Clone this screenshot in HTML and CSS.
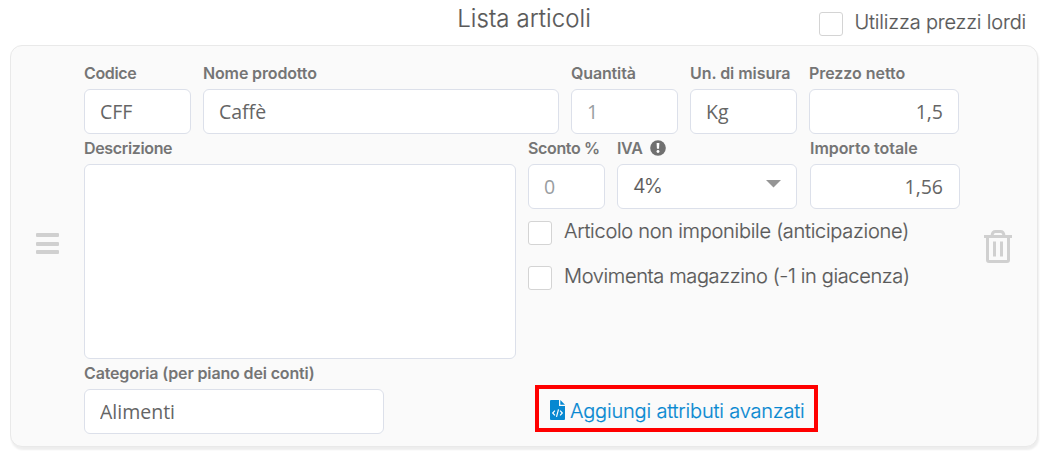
FILE: index.html
```html
<!DOCTYPE html>
<html lang="it">
<head>
<meta charset="utf-8">
<title>Lista articoli</title>
<link rel="stylesheet" href="styles.css">
</head>
<body>
<header class="header">
  <span></span>
  <h1 class="title"><span>Lista articoli</span></h1>
  <label class="check gross"><input type="checkbox" class="box"><span class="t-gross">Utilizza prezzi lordi</span></label>
</header>
<main class="card">
  <div class="handle"><i></i><i></i><i></i></div>
  <div class="form">
    <div class="row">
      <div class="field w-107"><label class="tight">Codice</label><input value="CFF"></div>
      <div class="field w-356"><label>Nome prodotto</label><input value="Caffè"></div>
      <div class="field w-107"><label>Quantità</label><input placeholder="1"></div>
      <div class="field w-107"><label class="wide">Un. di misura</label><input value="Kg"></div>
      <div class="field w-150"><label class="wide">Prezzo netto</label><input class="num" value="1,5"></div>
    </div>
    <div class="row middle">
      <div class="field w-432"><label class="tight">Descrizione</label><textarea></textarea></div>
      <div class="side">
        <div class="row">
          <div class="field w-77"><label class="tight">Sconto %</label><input placeholder="0"></div>
          <div class="field w-180"><label class="tight">IVA <svg class="info" viewBox="0 0 16 16"><circle cx="8" cy="8" r="7.8"/><path d="M6.6 3h2.8l-.35 5.8h-2.1z"/><circle class="dot" cx="8" cy="11.5" r="1.45"/></svg></label>
            <div class="select"><span>4%</span><svg class="arrow" viewBox="0 0 15 8"><path d="M0 0h15L7.5 7.5z"/></svg></div></div>
          <div class="field w-150 total"><label class="wide">Importo totale</label><input class="num" value="1,56"></div>
        </div>
        <label class="check"><input type="checkbox" class="box"><span class="t-art">Articolo non imponibile (anticipazione)</span></label>
        <label class="check"><input type="checkbox" class="box"><span class="t-mov">Movimenta magazzino (-1 in giacenza)</span></label>
      </div>
    </div>
    <div class="row last">
      <div class="field w-300"><label>Categoria (per piano dei conti)</label><input value="Alimenti"></div>
      <a class="advanced"><svg class="file" viewBox="0 0 15 20"><path d="M1 0h8v6h6v13a1 1 0 0 1-1 1H1a1 1 0 0 1-1-1V1a1 1 0 0 1 1-1z"/><path d="M10.3 0l4.7 4.8h-4.7z"/><path class="code" d="M4.900 10.700 2.700 13l2.200 2.300M10.100 10.700l2.200 2.300-2.200 2.300M8.500 9.300l-2 7.600"/></svg><span>Aggiungi attributi avanzati</span></a>
    </div>
  </div>
  <svg class="trash" viewBox="0 0 28 33"><path d="M0 6.500H28M3.500 6.500V30Q3.500 31.500 5 31.500H23Q24.500 31.500 24.500 30V6.500M8 6Q8.300 1.500 11.500 1.500H16.500Q19.700 1.500 20 6M10.500 11.500V26.500M17.500 11.500V26.500"/></svg>
</main>
</body>
</html>
```
FILE: styles.css
```css
* { box-sizing: border-box; }
body { margin: 0; background: #fff; color: #595959; font-family: Inter, sans-serif; height: 457px; overflow: hidden; }
.header { display: grid; grid-template-columns: 1fr auto 1fr; height: 45px; padding-right: 23px; }
.title { margin: 0; padding-left: 22px; font-size: 24px; font-weight: 300; line-height: 37px; letter-spacing: .08px; -webkit-text-stroke: .2px; }
.gross { justify-self: end; margin-top: 11px; }
.card { display: flex; width: 1028px; height: 402px; margin-left: 10px; border: 1px solid #e9e9e9; border-radius: 12px; background: #fafafa; box-shadow: 1px 3px 2px rgba(0, 0, 0, .07); }
.handle { display: flex; flex-direction: column; justify-content: space-between; width: 23px; height: 21px; margin: 187px 25px 0 25px; }
.handle i { height: 4px; background: #d0d0d0; border-radius: 1px; }
.form { width: 876px; padding-top: 16px; }
.row { display: flex; gap: 12px; height: 75px; }
.row.middle { height: 225px; }
.field { flex: none; }
.field label { display: flex; align-items: center; height: 27px; padding-bottom: 5px; font-size: 16px; font-weight: 600; color: #757575; white-space: nowrap; letter-spacing: -.14px; }
.field label.tight { letter-spacing: -.35px; }
.field label.wide { letter-spacing: -.05px; }
.field input, .select { display: block; width: 100%; height: 45px; padding: 0 15px; border: 1px solid #dce0ea; border-radius: 6px; background: #fff; color: #656565; font: 400 19.5px "Open Sans", sans-serif; outline: 0; }
.field input::placeholder { color: #999da1; opacity: 1; }
.field input.num { text-align: right; }
textarea { display: block; width: 100%; height: 195px; border: 1px solid #dce0ea; border-radius: 6px; background: #fff; resize: none; }
.w-77 { width: 77px; } .w-107 { width: 107px; } .w-150 { width: 150px; } .w-180 { width: 180px; }
.w-300 { width: 300px; } .w-356 { width: 356px; } .w-432 { width: 432px; }
.total { margin-left: 1px; }
.total input { padding-right: 16px; }
.info { width: 16px; height: 16px; margin-left: 8px; fill: #707070; }
.info path, .info .dot { fill: #fff; }
.field .select { display: flex; align-items: center; justify-content: space-between; color: #595959; font-family: Inter, sans-serif; font-size: 20px; font-weight: 300; padding-bottom: 2px; letter-spacing: -1.5px; -webkit-text-stroke: .2px; }
.arrow { width: 15px; height: 8px; fill: #959595; margin-bottom: 3px; }
.check { display: flex; gap: 12px; height: 45px; }
.side .check { padding-top: 8px; }
.box { flex: none; appearance: none; width: 24px; height: 24px; margin: 1px 0 0; border: 1px solid #d4d4d4; border-radius: 3px; background: #fff; }
.check span { font-size: 20px; font-weight: 300; line-height: 22px; white-space: nowrap; letter-spacing: -.28px; -webkit-text-stroke: .2px; }
.check .t-gross { letter-spacing: -.18px; }
.check .t-mov { letter-spacing: -.36px; }
.advanced { display: flex; align-items: center; width: 283px; height: 47px; margin: 23px 0 0 139px; padding: 3px 0 0 11px; border: 4px solid #f00; color: #0788d1; font-size: 20px; font-weight: 300; letter-spacing: -.18px; white-space: nowrap; -webkit-text-stroke: .2px; }
.advanced span { padding-top: 1px; }
.file { width: 15px; height: 20px; margin: 0 5px 1px 0; fill: #0788d1; }
.file .code { fill: none; stroke: #fff; stroke-width: 1.2; }
.trash { width: 28px; height: 33px; margin: 184px 0 0 24px; fill: none; stroke: #d0d0d0; stroke-width: 3; }
```
